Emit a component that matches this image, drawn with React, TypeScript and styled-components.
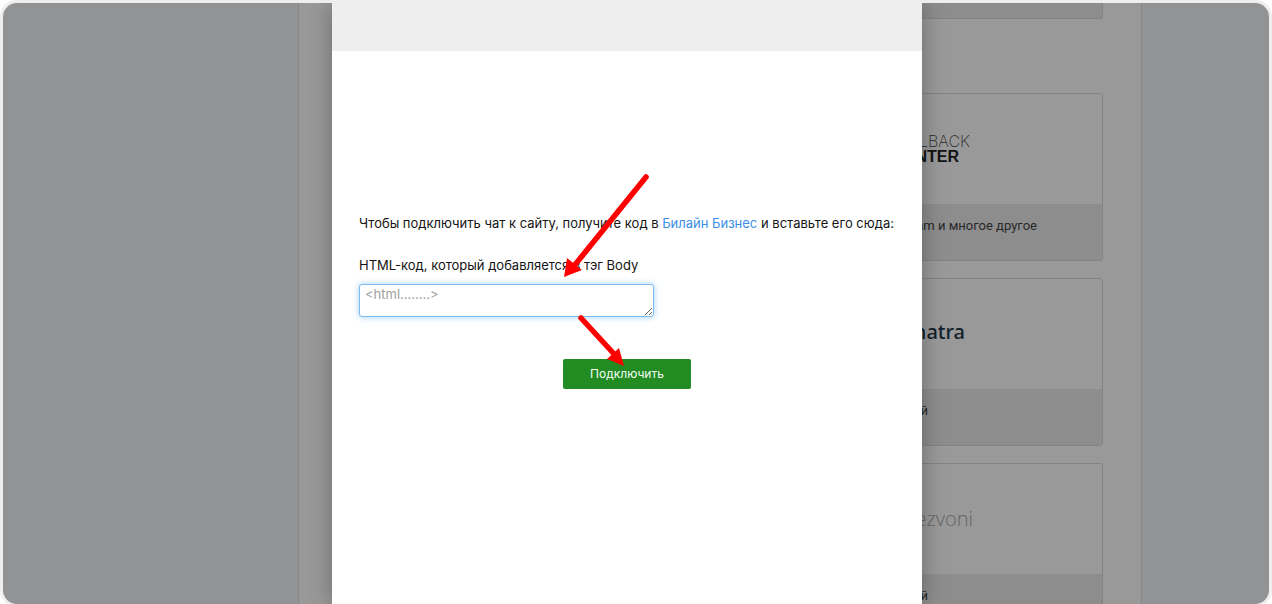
import React from 'react';
import styled, { createGlobalStyle } from 'styled-components';

const GlobalStyle = createGlobalStyle`
  *, *::before, *::after { box-sizing: border-box; }
  html, body, #root { height: 100%; }
  body {
    margin: 0;
    background: #fff;
    color: #141414;
    font-family: Inter, "Liberation Sans", sans-serif;
    font-size: 13px;
    line-height: 20px;
  }
`;

const Screen = styled.div`
  height: 100vh;
  padding: 3px 3px 0;
  overflow: hidden;
`;

const Frame = styled.div`
  position: relative;
  height: 100%;
  border-radius: 14px;
  overflow: hidden;
  background: #f4f6f8;
  box-shadow: 0 0 0 3px #eee;
`;

const Page = styled.div`
  display: flex;
  height: 100%;
`;

const Gutter = styled.div<{ $share: number }>`
  flex: ${(p) => p.$share} 1 0;
`;

const Content = styled.main`
  flex: 0 0 844px;
  display: flex;
  flex-direction: column;
  align-items: flex-end;
  gap: 17px;
  padding: 0 38px;
  overflow: hidden;
  background: #fff;
  border: solid #e0e4e8;
  border-width: 0 1px;
`;

const CardEnd = styled.div`
  flex: none;
  width: 375px;
  height: 16px;
  margin-bottom: 57px;
  background: #ebebeb;
  border: 1px solid #dadada;
  border-top: 0;
  border-radius: 0 0 3px 3px;
`;

const Card = styled.article`
  flex: none;
  width: 375px;
  border: 1px solid #dadada;
  border-radius: 3px;
  overflow: hidden;
`;

const CardLogo = styled.div`
  display: flex;
  flex-direction: column;
  justify-content: center;
  height: 110px;
`;

const LogoLine = styled.span<{ $measure: number }>`
  width: ${(p) => p.$measure}px;
  text-align: right;
  white-space: nowrap;
`;

const ThinLogo = styled(LogoLine)`
  font: 200 16px/16px Inter, sans-serif;
  color: #444;
`;

const BoldLogo = styled(LogoLine)`
  font: 700 16px/16px "Liberation Sans", sans-serif;
  color: #222;
`;

const ChatraLogo = styled(LogoLine)`
  margin-bottom: 4px;
  font: 500 20px/24px "Noto Sans", sans-serif;
  color: #1c3848;
`;

const LightLogo = styled(LogoLine)`
  font: 300 20px/24px "Open Sans", sans-serif;
  color: #aaa;
`;

const CardNote = styled.p<{ $measure: number }>`
  height: 56px;
  margin: 0;
  padding: 12px calc(100% - ${(p) => p.$measure}px) 0 0;
  background: #ebebeb;
  color: #444;
  font: 13px/20px Roboto, sans-serif;
  text-align: right;
  white-space: nowrap;
`;

const Overlay = styled.div`
  position: absolute;
  inset: 0;
  display: flex;
  justify-content: center;
  padding-right: 18px;
  background: rgba(0, 0, 0, 0.4);
`;

const Dialog = styled.section`
  position: relative;
  width: 590px;
  background: #fff;
  box-shadow: 0 0 22px rgba(0, 0, 0, 0.3);
`;

const DialogHeader = styled.header`
  height: 48px;
  background: #eee;
`;

const Form = styled.form`
  display: flex;
  flex-direction: column;
  padding: 162px 27px 0;
`;

const Lead = styled.p`
  margin: 0 0 22px;
  white-space: nowrap;
`;

const Link = styled.a`
  color: #3c8fe6;
  text-decoration: none;
`;

const Label = styled.label`
  margin-bottom: 9px;
`;

const CodeBox = styled.textarea`
  width: 295px;
  height: 33px;
  margin: 0 0 42px;
  padding: 0 5px;
  border: 1px solid #7dbcf2;
  border-radius: 3px;
  outline: 0;
  box-shadow: 0 0 6px rgba(102, 175, 233, 0.6);
  font: 13px/18px Inter, sans-serif;
  overflow: hidden;
  resize: both;

  &::placeholder { color: #a0a0a0; }
`;

const Submit = styled.button`
  align-self: center;
  width: 128px;
  height: 30px;
  padding: 0;
  border: 0;
  border-radius: 2px;
  background: #228b22;
  color: #f4fff4;
  font: 12px/20px Inter, sans-serif;
`;

const Arrows = styled.svg`
  position: absolute;
  left: 222px;
  top: 165px;
  pointer-events: none;
`;

export default function App() {
  return (
    <Screen>
      <GlobalStyle />
      <Frame>
        <Page>
          <Gutter $share={295} />
          <Content>
            <CardEnd />
            <Card>
              <CardLogo>
                <ThinLogo $measure={241}>CALLBACK</ThinLogo>
                <BoldLogo $measure={230}>CENTER</BoldLogo>
              </CardLogo>
              <CardNote $measure={308}>Telegram и многое другое</CardNote>
            </Card>
            <Card>
              <CardLogo>
                <ChatraLogo $measure={236}>Chatra</ChatraLogo>
              </CardLogo>
              <CardNote $measure={199}>Чат с историей</CardNote>
            </Card>
            <Card>
              <CardLogo>
                <LightLogo $measure={244}>Perezvoni</LightLogo>
              </CardLogo>
              <CardNote $measure={199}>Звонок с историей</CardNote>
            </Card>
          </Content>
          <Gutter $share={127} />
        </Page>
        <Overlay>
          <Dialog role="dialog" aria-modal="true">
            <DialogHeader />
            <Form onSubmit={(e) => e.preventDefault()}>
              <Lead>
                Чтобы подключить чат к сайту, получите код в{' '}
                <Link href="#business">Билайн Бизнес</Link> и вставьте его сюда:
              </Lead>
              <Label htmlFor="code">HTML-код, который добавляется в тэг Body</Label>
              <CodeBox id="code" placeholder="<html........>" />
              <Submit type="submit">Подключить</Submit>
            </Form>
            <Arrows width="100" height="205" viewBox="554 168 100 205" aria-hidden="true">
              <g stroke="#f00" strokeWidth="5.5" strokeLinecap="round" fill="#f00">
                <path d="M646 177 L574 266" />
                <path d="M581 318 L615 355" />
                <path stroke="none" d="M564 277 L567 258 L582 270 Z" />
                <path stroke="none" d="M624 366 L607 359 L619 348 Z" />
              </g>
            </Arrows>
          </Dialog>
        </Overlay>
      </Frame>
    </Screen>
  );
}
